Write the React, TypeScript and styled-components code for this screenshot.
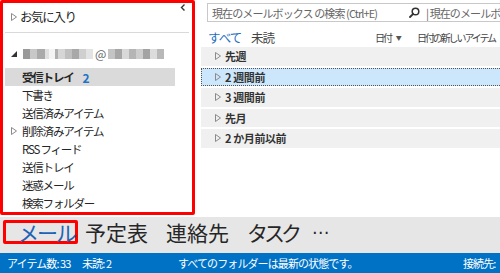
import React from "react";
import styled, { createGlobalStyle } from "styled-components";

const GlobalStyle = createGlobalStyle`
  html, body {
    margin: 0;
    padding: 0;
    background: #ffffff;
  }
  body {
    font-family: "Noto Sans CJK JP", "Noto Sans", sans-serif;
    color: #262626;
  }
`;

const Shell = styled.div`
  width: 500px;
  height: 273px;
  display: flex;
  flex-direction: column;
  overflow: hidden;
`;

const Main = styled.div`
  height: 217px;
  display: flex;
  gap: 6px;
`;

/* ---------- folder pane ---------- */

const FolderPane = styled.nav`
  box-sizing: border-box;
  flex: 0 0 195px;
  height: 215px;
  border: 3px solid #ff0000;
  border-radius: 2px;
  display: flex;
  flex-direction: column;
  background: #ffffff;
`;

const PaneHeader = styled.div`
  height: 28px;
  display: flex;
  justify-content: space-between;
  padding: 0 6px 0 8px;
`;

const Favorites = styled.div`
  display: flex;
  align-items: center;
  gap: 3px;
  font-size: 12.5px;
  letter-spacing: -1.4px;
`;

const CollapseButton = styled.span`
  display: inline-flex;
  padding-top: 1px;
`;

const Divider = styled.div`
  height: 1px;
  background: #d9d9d9;
  margin: 2px 3px 0 2px;
`;

const AccountRow = styled.div`
  height: 18px;
  margin: 12px 0 5px 8px;
  display: flex;
  align-items: center;
  gap: 6px;
`;

const Redacted = styled.div`
  display: flex;
  align-items: center;
  height: 10px;
`;

const Pixel = styled.span<{ $w: number; $c: string }>`
  display: inline-block;
  width: ${(p) => p.$w}px;
  height: 10px;
  background: ${(p) => p.$c};
`;

const At = styled.span`
  font-size: 12px;
  line-height: 10px;
  color: #666;
  margin: 0 2px;
`;

const FolderRow = styled.div<{ $selected?: boolean }>`
  height: 18.4px;
  margin: 0 17px 0 2px;
  padding-left: 6px;
  display: flex;
  align-items: center;
  gap: 3px;
  font-size: 11.5px;
  letter-spacing: -1.2px;
  font-weight: ${(p) => (p.$selected ? 700 : 400)};
  background: ${(p) => (p.$selected ? "#dadada" : "transparent")};
  white-space: nowrap;
`;

const Expander = styled.span<{ $hidden?: boolean }>`
  width: 8px;
  display: inline-flex;
  visibility: ${(p) => (p.$hidden ? "hidden" : "visible")};
`;

const Count = styled.span`
  color: #1e73c8;
  margin-left: 6px;
  font-size: 12px;
`;

/* ---------- message list ---------- */

const ListPane = styled.section`
  flex: 1;
  min-width: 0;
  overflow: hidden;
  display: flex;
  flex-direction: column;
`;

const SearchBox = styled.div`
  box-sizing: border-box;
  margin: 3px 0 0 6px;
  width: 340px;
  height: 19px;
  border: 1px solid #c8c8c8;
  display: flex;
  align-items: center;
  padding-left: 4px;
  font-size: 11px;
  letter-spacing: -0.9px;
  color: #666;
  white-space: nowrap;
`;

const SearchHint = styled.span`
  flex: 0 0 197px;
  overflow: hidden;
`;

const Scope = styled.span`
  margin-left: 6px;
  color: #666;
`;

const FilterBar = styled.div`
  box-sizing: border-box;
  height: 25px;
  display: grid;
  grid-template-columns: 43px 124px 42px auto;
  align-items: center;
  padding: 5px 0 0 7px;
  white-space: nowrap;
`;

const Filter = styled.span<{ $active?: boolean }>`
  font-size: 12.5px;
  letter-spacing: -1px;
  color: ${(p) => (p.$active ? "#1e6fc0" : "#444")};
`;

const Sort = styled.span`
  font-size: 10px;
  letter-spacing: -2.1px;
  color: #444;
  display: inline-flex;
  align-items: center;
  gap: 5px;
`;

const Caret = styled.span`
  font-size: 6px;
  letter-spacing: 0;
  color: #555;
`;

const Groups = styled.div`
  display: flex;
  flex-direction: column;
  gap: 2px;
`;

const GroupRow = styled.div<{ $focused?: boolean }>`
  box-sizing: border-box;
  height: 18.5px;
  display: flex;
  align-items: center;
  gap: 4px;
  padding-left: 13px;
  font-size: 11px;
  letter-spacing: -0.4px;
  font-weight: 700;
  color: #333;
  background: ${(p) => (p.$focused ? "#cce6fb" : "#f0f0f0")};
  border: 1px ${(p) => (p.$focused ? "dotted #555" : "solid transparent")};
  border-right: none;
`;

/* ---------- bottom ---------- */

const NavBar = styled.div`
  height: 36px;
  background: #e6e6e6;
  display: flex;
  align-items: flex-start;
  padding: 3px 0 0 3px;
  box-sizing: border-box;
  white-space: nowrap;
`;

const NavItem = styled.span<{ $active?: boolean; $tracking?: number; $gap?: number }>`
  box-sizing: border-box;
  height: 24px;
  display: inline-flex;
  align-items: center;
  font-size: 21px;
  line-height: 24px;
  color: ${(p) => (p.$active ? "#1f63b5" : "#262626")};
  border: ${(p) => (p.$active ? "3px solid #ff0000" : "none")};
  border-radius: 2px;
  width: ${(p) => (p.$active ? "75px" : "auto")};
  padding-left: ${(p) => (p.$active ? "12px" : "0")};
  letter-spacing: ${(p) => p.$tracking ?? 0}px;
  margin-right: ${(p) => p.$gap ?? 18}px;
`;

const More = styled.span`
  font-family: "DejaVu Sans", sans-serif;
  font-size: 17px;
  line-height: 24px;
  color: #262626;
  letter-spacing: -1px;
`;

const StatusBar = styled.footer`
  height: 20px;
  background: #0072c6;
  color: #ffffff;
  font-size: 11px;
  letter-spacing: -0.9px;
  display: flex;
  align-items: center;
  padding-left: 7px;
  white-space: nowrap;
`;

const StatusText = styled.span<{ $w?: number }>`
  width: ${(p) => (p.$w ? `${p.$w}px` : "auto")};
`;

const OutlineTriangle = () => (
  <svg width="6" height="8" viewBox="0 0 6 8">
    <path d="M0.5 0.5 L5.5 4 L0.5 7.5 Z" fill="none" stroke="#8a8a8a" strokeWidth="1" />
  </svg>
);

const SolidTriangle = () => (
  <svg width="6" height="6" viewBox="0 0 6 6">
    <path d="M6 0 L6 6 L0 6 Z" fill="#333" />
  </svg>
);

const Chevron = () => (
  <svg width="6" height="7" viewBox="0 0 6 7">
    <path d="M4.5 0.5 L1.5 3.5 L4.5 6.5" fill="none" stroke="#333" strokeWidth="1.4" />
  </svg>
);

const Magnifier = () => (
  <svg width="11" height="11" viewBox="0 0 11 11">
    <circle cx="6.5" cy="4.5" r="3.3" fill="none" stroke="#333" strokeWidth="1.5" />
    <path d="M4.2 6.8 L1 10" stroke="#333" strokeWidth="1.8" strokeLinecap="round" />
  </svg>
);

const redactedLeft: [number, string][] = [
  [7, "#9a9a9a"], [7, "#c8c8c8"], [8, "#aaaaaa"], [4, "#e0e0e0"],
  [6, "#f4f4f4"], [3, "#b0b0b0"], [7, "#d6d6d6"], [7, "#c0c0c0"],
  [7, "#a8a8a8"], [7, "#cfcfcf"], [7, "#e3e3e3"],
];
const redactedRight: [number, string][] = [
  [7, "#c4c4c4"], [7, "#a6a6a6"], [7, "#d8d8d8"], [7, "#b5b5b5"],
  [7, "#cdcdcd"], [7, "#a3a3a3"], [7, "#dcdcdc"], [7, "#b8b8b8"],
];

const folders = [
  { name: "下書き" },
  { name: "送信済みアイテム" },
  { name: "削除済みアイテム", expandable: true },
  { name: "RSS フィード" },
  { name: "送信トレイ" },
  { name: "迷惑メール" },
  { name: "検索フォルダー" },
];

const groups = ["先週", "2 週間前", "3 週間前", "先月", "2 か月前以前"];

export default function App() {
  return (
    <>
      <GlobalStyle />
      <Shell>
        <Main>
          <FolderPane>
            <PaneHeader>
              <Favorites>
                <OutlineTriangle />
                お気に入り
              </Favorites>
              <CollapseButton>
                <Chevron />
              </CollapseButton>
            </PaneHeader>
            <Divider />
            <AccountRow>
              <SolidTriangle />
              <Redacted>
                {redactedLeft.map(([w, c], i) => (
                  <Pixel key={i} $w={w} $c={c} />
                ))}
                <At>@</At>
                {redactedRight.map(([w, c], i) => (
                  <Pixel key={i} $w={w} $c={c} />
                ))}
              </Redacted>
            </AccountRow>
            <FolderRow $selected>
              <Expander $hidden>
                <OutlineTriangle />
              </Expander>
              受信トレイ<Count>2</Count>
            </FolderRow>
            {folders.map((f) => (
              <FolderRow key={f.name}>
                <Expander $hidden={!f.expandable}>
                  <OutlineTriangle />
                </Expander>
                {f.name}
              </FolderRow>
            ))}
          </FolderPane>

          <ListPane>
            <SearchBox>
              <SearchHint>現在のメールボックス の検索 (Ctrl+E)</SearchHint>
              <Magnifier />
              <Scope>| 現在のメールボックス</Scope>
            </SearchBox>
            <FilterBar>
              <Filter $active>すべて</Filter>
              <Filter>未読</Filter>
              <Sort>
                日付<Caret>▼</Caret>
              </Sort>
              <Sort>
                日付の新しいアイテム<Caret>∨</Caret>
              </Sort>
            </FilterBar>
            <Groups>
              {groups.map((g, i) => (
                <GroupRow key={g} $focused={i === 1}>
                  <OutlineTriangle />
                  {g}
                </GroupRow>
              ))}
            </Groups>
          </ListPane>
        </Main>

        <NavBar>
          <NavItem $active $tracking={-2} $gap={7}>
            メール
          </NavItem>
          <NavItem>予定表</NavItem>
          <NavItem>連絡先</NavItem>
          <NavItem $tracking={-4} $gap={14}>
            タスク
          </NavItem>
          <More>⋯</More>
        </NavBar>

        <StatusBar>
          <StatusText $w={75}>アイテム数: 33</StatusText>
          <StatusText $w={96}>未読: 2</StatusText>
          <StatusText $w={285}>すべてのフォルダーは最新の状態です。</StatusText>
          <StatusText>接続先:</StatusText>
        </StatusBar>
      </Shell>
    </>
  );
}
